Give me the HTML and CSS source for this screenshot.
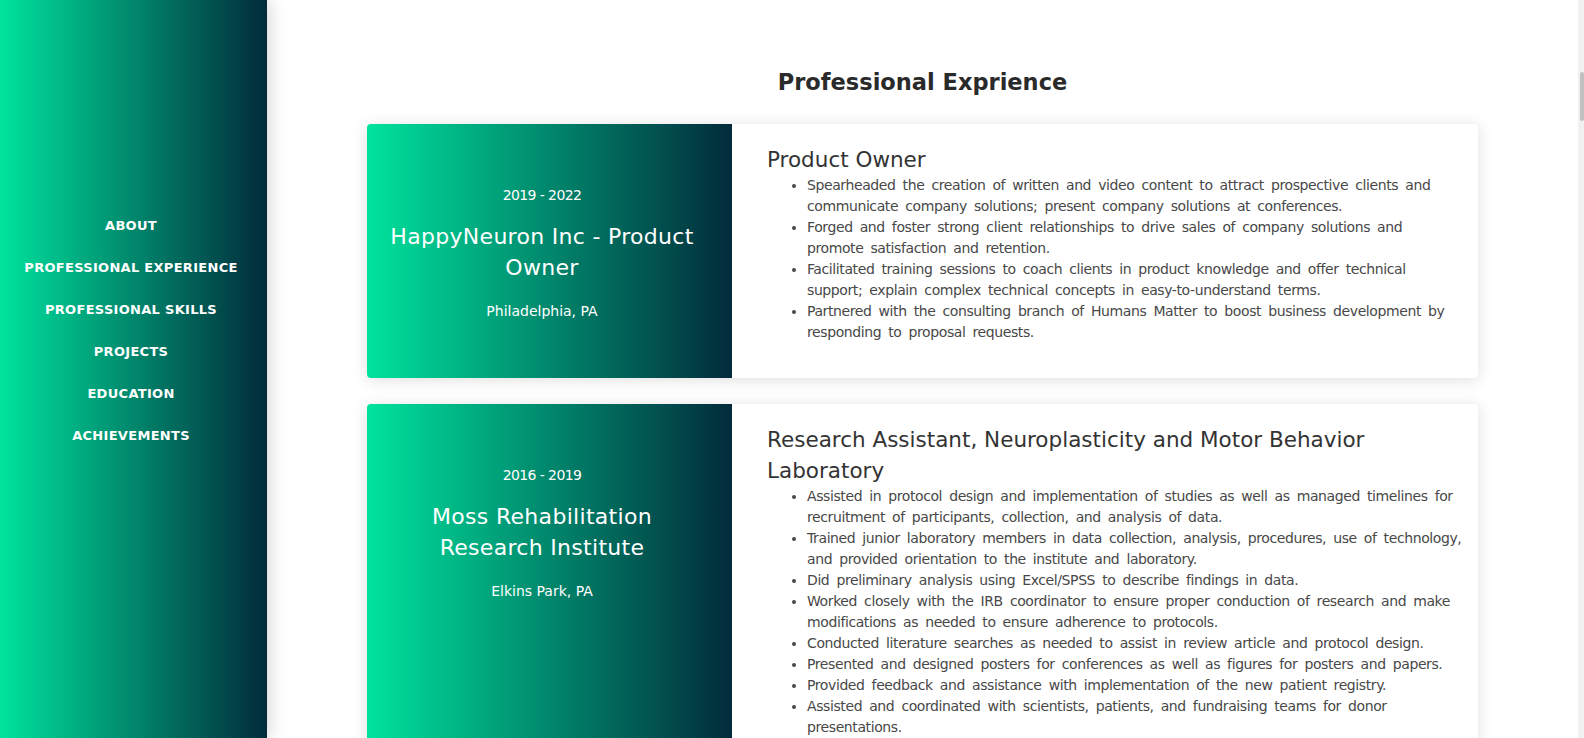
FILE: index.html
```html
<!DOCTYPE html>
<html lang="en">
<head>
<meta charset="utf-8">
<title>Professional Experience</title>
<link rel="stylesheet" href="styles.css">
</head>
<body>
<div class="page">
  <nav class="sidebar">
    <ul class="nav">
      <li><a href="#about">About</a></li>
      <li><a href="#experience">Professional Experience</a></li>
      <li><a href="#skills">Professional Skills</a></li>
      <li><a href="#projects">Projects</a></li>
      <li><a href="#education">Education</a></li>
      <li><a href="#achievements">Achievements</a></li>
    </ul>
  </nav>
  <main class="main" id="experience">
    <h2 class="section-title">Professional Exprience</h2>

    <article class="card">
      <div class="card-side">
        <div class="date">2019 - 2022</div>
        <h3 class="company">HappyNeuron Inc - Product Owner</h3>
        <div class="loc">Philadelphia, PA</div>
      </div>
      <div class="card-body">
        <h3 class="role">Product Owner</h3>
        <ul class="duties">
          <li>Spearheaded the creation of written and video content to attract prospective clients and communicate company solutions; present company solutions at conferences.</li>
          <li>Forged and foster strong client relationships to drive sales of company solutions and promote satisfaction and retention.</li>
          <li>Facilitated training sessions to coach clients in product knowledge and offer technical support; explain complex technical concepts in easy-to-understand terms.</li>
          <li>Partnered with the consulting branch of Humans Matter to boost business development by responding to proposal requests.</li>
        </ul>
      </div>
    </article>

    <article class="card">
      <div class="card-side">
        <div class="date">2016 - 2019</div>
        <h3 class="company">Moss Rehabilitation Research Institute</h3>
        <div class="loc">Elkins Park, PA</div>
      </div>
      <div class="card-body">
        <h3 class="role">Research Assistant, Neuroplasticity and Motor Behavior Laboratory</h3>
        <ul class="duties">
          <li>Assisted in protocol design and implementation of studies as well as managed timelines for recruitment of participants, collection, and analysis of data.</li>
          <li>Trained junior laboratory members in data collection, analysis, procedures, use of technology, and provided orientation to the institute and laboratory.</li>
          <li>Did preliminary analysis using Excel/SPSS to describe findings in data.</li>
          <li>Worked closely with the IRB coordinator to ensure proper conduction of research and make modifications as needed to ensure adherence to protocols.</li>
          <li>Conducted literature searches as needed to assist in review article and protocol design.</li>
          <li>Presented and designed posters for conferences as well as figures for posters and papers.</li>
          <li>Provided feedback and assistance with implementation of the new patient registry.</li>
          <li>Assisted and coordinated with scientists, patients, and fundraising teams for donor presentations.</li>
        </ul>
      </div>
    </article>
  </main>
  <div class="scrollbar"><div class="thumb"></div></div>
</div>
</body>
</html>
```

FILE: styles.css
```css
html, body {
  margin: 0;
  height: 100%;
  overflow: hidden;
}

body {
  font-family: "DejaVu Sans", "Open Sans", sans-serif;
  background: #fff;
  color: #333;
}

.page {
  display: flex;
  height: 738px;
}

.sidebar {
  flex: 0 0 267px;
  background: linear-gradient(to right, #00e39d, #022b3b);
  box-shadow: 0 0 18px rgba(0, 0, 0, 0.22);
  position: relative;
  z-index: 1;
}

.nav {
  list-style: none;
  margin: 0;
  padding: 215px 5px 0 0;
  text-align: center;
  font-size: 13px;
}

.nav li {
  line-height: 22px;
  margin-bottom: 20px;
}

.nav a {
  color: #fff;
  font-weight: 700;
  font-size: 13px;
  letter-spacing: 0.3px;
  text-transform: uppercase;
  text-decoration: none;
}

.main {
  flex: 1;
  overflow: hidden;
  padding-top: 67px;
}

.section-title {
  text-align: center;
  font-size: 22.5px;
  line-height: 30px;
  font-weight: 700;
  color: #2a2a2a;
  margin: 0 0 27px;
}

.card {
  width: 1111px;
  margin: 0 auto 26px;
  display: flex;
  background: #fff;
  border-radius: 4px;
  box-shadow: 0 2px 16px rgba(0, 0, 0, 0.13);
  overflow: hidden;
}

.card-side {
  flex: 0 0 365px;
  box-sizing: border-box;
  background: linear-gradient(to right, #00e39d, #022b3b);
  color: #fff;
  text-align: center;
  padding: 61px 35px 40px 20px;
}

.date,
.loc {
  font-size: 14px;
  line-height: 21px;
}

.date {
  margin-bottom: 15px;
  letter-spacing: -0.6px;
}

.company {
  font-size: 22px;
  line-height: 31px;
  font-weight: 400;
  letter-spacing: 0.3px;
  margin: 0 0 17.5px;
}

.card-body {
  flex: 1;
  padding: 20px 15.5px 19px 35px;
}

.role {
  font-size: 21.5px;
  line-height: 31px;
  font-weight: 400;
  color: #333;
  margin: 0;
}

.duties {
  margin: 0 0 16px;
  padding-left: 40px;
  font-size: 14px;
  line-height: 21px;
  letter-spacing: -0.4px;
  word-spacing: 3px;
  color: #484848;
}

.scrollbar {
  flex: 0 0 6px;
  background: #f1f1f1;
}

.thumb {
  margin: 72px 0 0 2px;
  height: 49px;
  background: #c1c1c1;
  border-radius: 2px;
}
```
